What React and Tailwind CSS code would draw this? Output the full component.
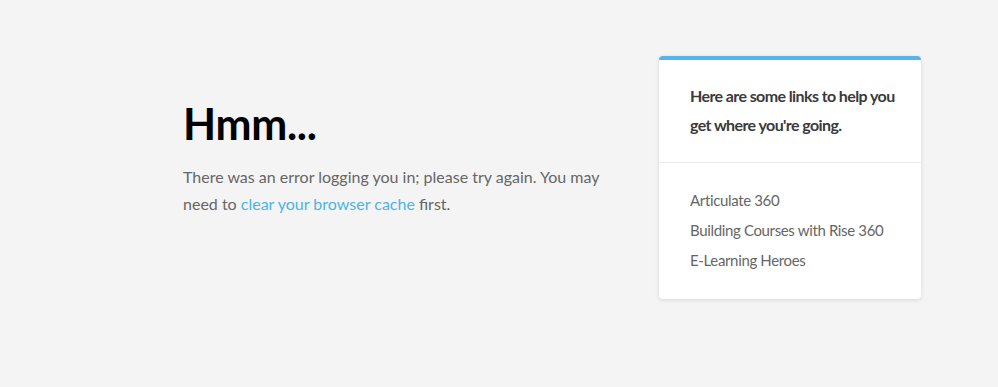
export default function App() {
  return (
    <div className="min-h-[387px] w-full bg-[#f4f4f4]" style={{ fontFamily: "Lato, 'Open Sans', sans-serif" }}>
      <div className="flex items-start pt-[56px] pl-[183px]">
        <div className="w-[430px] pt-[41px]">
          <h1 className="text-[43px] font-bold leading-[54px] tracking-[-0.3px] text-black">Hmm...</h1>
          <p className="mt-[12px] text-[16px] leading-[27px] text-[#666666]">
            There was an error logging you in; please try again. You may need to{" "}
            <a className="text-[#4bb4e6]">clear your browser cache</a> first.
          </p>
        </div>
        <div className="ml-[46px] w-[262px] overflow-hidden rounded-[4px] border-t-4 border-[#55b5ea] bg-white shadow-[0_1px_4px_rgba(0,0,0,0.12)]">
          <div className="border-b border-[#ececec] pl-[31px] pr-[12px] pt-[21px] pb-[23px]">
            <p className="text-[16px] font-bold leading-[29px] tracking-[-0.6px] text-[#3a3a3a]">
              Here are some links to help you get where you're going.
            </p>
          </div>
          <div className="flex flex-col pl-[31px] pr-[12px] pt-[22px] pb-[24px] text-[15px] leading-[30px] tracking-[-0.35px] text-[#666666]">
            <a>Articulate 360</a>
            <a>Building Courses with Rise 360</a>
            <a>E-Learning Heroes</a>
          </div>
        </div>
      </div>
    </div>
  );
}
